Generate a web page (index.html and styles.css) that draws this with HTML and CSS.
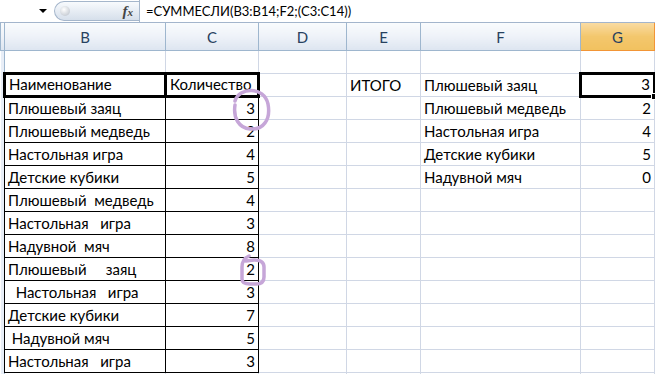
FILE: index.html
```html
<!DOCTYPE html>
<html>
  <head>
    <meta charset="utf-8" />
    <title>СУММЕСЛИ</title>
    <link rel="stylesheet" href="styles.css">
  </head>
  <body>
    <div class="formula-bar">
      <div class="name-box"><span class="arrow"></span></div>
      <div class="fx-pill">
        <span class="knob"></span>
        <span class="fx">f<small>x</small></span>
      </div>
      <div class="formula">=СУММЕСЛИ(B3:B14;F2;(C3:C14))</div>
    </div>

    <table class="sheet">
      <colgroup>
        <col class="w-rh">
        <col class="w-b">
        <col class="w-c">
        <col class="w-d">
        <col class="w-e">
        <col class="w-f">
        <col class="w-g">
        <col>
      </colgroup>
      <thead>
        <tr>
          <th class="rh"></th>
          <th>B</th>
          <th>C</th>
          <th>D</th>
          <th>E</th>
          <th>F</th>
          <th class="sel">G</th>
          <th></th>
        </tr>
      </thead>
      <tbody>
        <tr><td class="rh"></td><td class="b"></td><td></td><td></td><td></td><td></td><td></td><td></td></tr>
        <tr>
          <td class="rh"></td>
          <td class="b t-head">Наименование</td>
          <td class="t-head">Количество</td>
          <td></td>
          <td>ИТОГО</td>
          <td>Плюшевый заяц</td>
          <td class="num active">3<span class="handle"></span></td>
          <td></td>
        </tr>
        <tr><td class="rh"></td><td class="b t">Плюшевый заяц</td><td class="t num">3</td><td></td><td></td><td>Плюшевый медведь</td><td class="num">2</td><td></td></tr>
        <tr><td class="rh"></td><td class="b t">Плюшевый медведь</td><td class="t num">2</td><td></td><td></td><td>Настольная игра</td><td class="num">4</td><td></td></tr>
        <tr><td class="rh"></td><td class="b t">Настольная игра</td><td class="t num">4</td><td></td><td></td><td>Детские кубики</td><td class="num">5</td><td></td></tr>
        <tr><td class="rh"></td><td class="b t">Детские кубики</td><td class="t num">5</td><td></td><td></td><td>Надувной мяч</td><td class="num">0</td><td></td></tr>
        <tr><td class="rh"></td><td class="b t">Плюшевый  медведь</td><td class="t num">4</td><td></td><td></td><td></td><td></td><td></td></tr>
        <tr><td class="rh"></td><td class="b t">Настольная   игра</td><td class="t num">3</td><td></td><td></td><td></td><td></td><td></td></tr>
        <tr><td class="rh"></td><td class="b t">Надувной  мяч</td><td class="t num">8</td><td></td><td></td><td></td><td></td><td></td></tr>
        <tr><td class="rh"></td><td class="b t">Плюшевый     заяц</td><td class="t num">2</td><td></td><td></td><td></td><td></td><td></td></tr>
        <tr><td class="rh"></td><td class="b t">  Настольная   игра</td><td class="t num">3</td><td></td><td></td><td></td><td></td><td></td></tr>
        <tr><td class="rh"></td><td class="b t">Детские кубики</td><td class="t num">7</td><td></td><td></td><td></td><td></td><td></td></tr>
        <tr><td class="rh"></td><td class="b t"> Надувной мяч</td><td class="t num">5</td><td></td><td></td><td></td><td></td><td></td></tr>
        <tr><td class="rh"></td><td class="b t">Настольная   игра</td><td class="t num">3</td><td></td><td></td><td></td><td></td><td></td></tr>
        <tr><td class="rh"></td><td class="b"></td><td></td><td></td><td></td><td></td><td></td><td></td></tr>
      </tbody>
    </table>

    <!-- hand-drawn marks around the matched values -->
    <svg class="marks" width="655" height="374" viewBox="0 0 655 374">
      <path d="M235 101 C239 87, 264 86, 268 104 C271 120, 263 130, 250 129 C239 128, 233 118, 235 105" />
      <path d="M249 256 Q242 259 242 267 L242 279 Q242 284 250 284 L256 284 Q264 284 264 277 L264 267 Q264 260 254 260 L246 261" />
    </svg>
  </body>
</html>
```

FILE: styles.css
```css
body {
  margin: 0;
  width: 655px;
  height: 374px;
  overflow: hidden;
  position: relative;
  background: #fff;
  font-family: Lato, "Liberation Sans", sans-serif;
  font-size: 15px;
  color: #000;
}

/* formula bar */
.formula-bar {
  display: flex;
  height: 22px;
  border-bottom: 1px solid #a3b5cc;
}

.name-box {
  width: 54px;
  display: flex;
  align-items: center;
  justify-content: flex-end;
  padding-right: 7px;
  box-sizing: border-box;
}

.arrow {
  width: 0;
  height: 0;
  border-left: 4px solid transparent;
  border-right: 4px solid transparent;
  border-top: 4px solid #000;
}

.fx-pill {
  width: 85px;
  height: 20px;
  margin-top: 1px;
  box-sizing: border-box;
  border: 1px solid #a5b6cb;
  border-right: 0;
  border-radius: 10px 0 0 10px;
  background: linear-gradient(#f8fafd, #d6dfeb);
  display: flex;
  align-items: center;
  justify-content: space-between;
  padding: 0 6px 0 5px;
}

.knob {
  width: 10px;
  height: 10px;
  border-radius: 50%;
  background: radial-gradient(circle at 40% 35%, #fff, #b5bcc6);
}

.fx {
  font-family: "Liberation Serif", serif;
  font-style: italic;
  font-weight: bold;
  font-size: 15px;
  color: #444;
}

.fx small {
  font-size: 11px;
}

.formula {
  flex: 1;
  border-left: 1px solid #a5b6cb;
  padding-left: 6px;
  line-height: 22px;
  font-size: 13px;
  white-space: pre;
}

/* sheet grid */
.sheet {
  border-collapse: collapse;
  table-layout: fixed;
  width: 680px;
}

.w-rh { width: 4px; }
.w-b { width: 161px; }
.w-c { width: 93px; }
.w-d { width: 88px; }
.w-e { width: 74px; }
.w-f { width: 160px; }
.w-g { width: 74px; }

.sheet th {
  height: 27px;
  padding: 0;
  border: 1px solid #9eb6ce;
  border-top: 0;
  background: linear-gradient(#f9fbfd, #eef2f8 50%, #dde5f0);
  color: #27415f;
  font-weight: normal;
  font-size: 15px;
  text-align: center;
}

.sheet th.sel {
  background: linear-gradient(#f9dba3, #f3c76d 50%, #f1c15f);
  border-color: #f29536;
}

.sheet tbody tr {
  height: 23px;
}

.sheet td {
  padding: 0 3px 1px;
  border: 1px solid #d0d7e5;
  vertical-align: bottom;
  white-space: pre;
  overflow: hidden;
  line-height: 19px;
}

.sheet td.rh {
  padding: 0;
  border: 0;
  background: #e8eef7;
}

.sheet td.b {
  border-left: 1px solid #9eb6ce;
}

.sheet td.num {
  text-align: right;
}

/* bordered table B2:C14 */
.sheet td.t-head {
  border: 3px solid #000;
}

.sheet td.t {
  border: 1px solid #000;
}

/* active cell G2 */
.sheet td.active {
  position: relative;
  overflow: visible;
  border: 3px solid #000;
}

.handle {
  position: absolute;
  right: -5px;
  bottom: -5px;
  width: 5px;
  height: 5px;
  background: #000;
  border: 1px solid #fff;
}

.marks {
  position: absolute;
  top: 0;
  left: 0;
  pointer-events: none;
  fill: none;
  stroke: #c6a6d8;
  stroke-width: 3.5;
  stroke-linecap: round;
  stroke-linejoin: round;
}
```
